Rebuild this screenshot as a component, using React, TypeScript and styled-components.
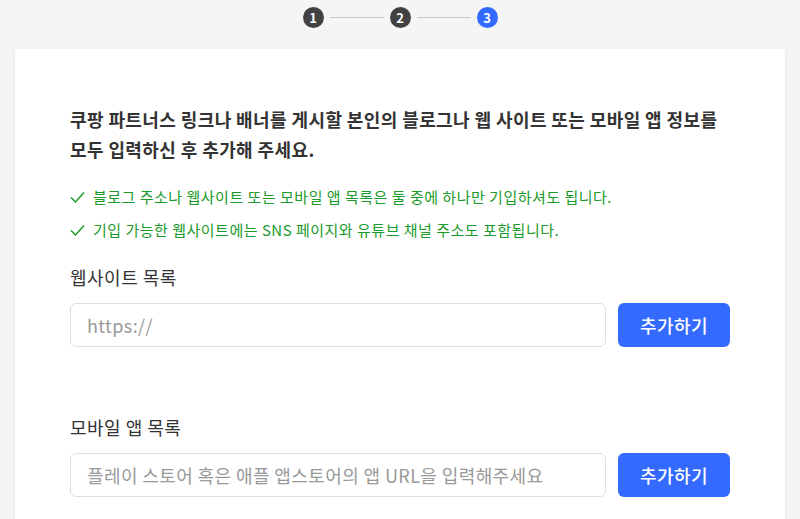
import * as React from "react";
import styled, { createGlobalStyle } from "styled-components";

const GlobalStyle = createGlobalStyle`
  html, body {
    margin: 0;
    padding: 0;
    background: #f5f5f5;
    font-family: "Noto Sans CJK KR", "Noto Sans", sans-serif;
    color: #333;
  }
  * { box-sizing: border-box; }
`;

const steps = [1, 2, 3];
const current = 3;

const notes = [
  "블로그 주소나 웹사이트 또는 모바일 앱 목록은 둘 중에 하나만 기입하셔도 됩니다.",
  "기입 가능한 웹사이트에는 SNS 페이지와 유튜브 채널 주소도 포함됩니다.",
];

const CheckIcon = () => (
  <svg width="15" height="13" viewBox="0 0 15 13" fill="none">
    <path d="M1 6.5 L5.5 11 L14 1.5" stroke="#1a9a2a" strokeWidth="1.5" />
  </svg>
);

export default function App() {
  return (
    <Page>
      <GlobalStyle />
      <Stepper>
        {steps.map((n, i) => (
          <React.Fragment key={n}>
            {i > 0 && <StepLine />}
            <StepDot active={n === current}>{n}</StepDot>
          </React.Fragment>
        ))}
      </Stepper>
      <Card>
        <Headline>
          쿠팡 파트너스 링크나 배너를 게시할 본인의 블로그나 웹 사이트 또는 모바일 앱 정보를
          <br />
          모두 입력하신 후 추가해 주세요.
        </Headline>
        <NoteList>
          {notes.map((t) => (
            <Note key={t}>
              <CheckIcon />
              <span>{t}</span>
            </Note>
          ))}
        </NoteList>
        <Section>
          <Label>웹사이트 목록</Label>
          <Row>
            <Input placeholder="https://" />
            <AddButton>추가하기</AddButton>
          </Row>
        </Section>
        <Section spaced>
          <Label>모바일 앱 목록</Label>
          <Row>
            <Input placeholder="플레이 스토어 혹은 애플 앱스토어의 앱 URL을 입력해주세요" />
            <AddButton>추가하기</AddButton>
          </Row>
        </Section>
      </Card>
    </Page>
  );
}

const Page = styled.div`
  padding: 0 15px;
  min-height: 519px;
  overflow: hidden;
`;

const Stepper = styled.div`
  height: 49px;
  display: flex;
  align-items: center;
  justify-content: center;
  padding-bottom: 15px;
  gap: 6px;
`;

const StepDot = styled.div<{ active?: boolean }>`
  width: 21px;
  height: 21px;
  border-radius: 50%;
  background: ${(p) => (p.active ? "#346aff" : "#424242")};
  color: #fff;
  font-size: 13px;
  font-weight: 700;
  display: flex;
  align-items: center;
  justify-content: center;
  line-height: 1;
`;

const StepLine = styled.div`
  width: 54px;
  height: 1px;
  background: #c8c8c8;
`;

const Card = styled.div`
  background: #fff;
  box-shadow: 0 1px 4px rgba(0, 0, 0, 0.06);
  padding: 55px 55px 40px;
  min-height: 600px;
`;

const Headline = styled.h2`
  margin: 0;
  font-size: 18px;
  font-weight: 700;
  line-height: 30px;
  color: #333;
  letter-spacing: 0.4px;
`;

const NoteList = styled.ul`
  list-style: none;
  margin: 22px 0 0;
  padding: 0;
  display: flex;
  flex-direction: column;
  gap: 11px;
`;

const Note = styled.li`
  display: flex;
  align-items: center;
  gap: 8px;
  font-size: 15px;
  line-height: 22px;
  color: #1a9a2a;
  letter-spacing: 0.5px;
`;

const Section = styled.div<{ spaced?: boolean }>`
  margin-top: ${(p) => (p.spaced ? "68px" : "24px")};
`;

const Label = styled.div`
  font-size: 18px;
  line-height: 24px;
  color: #333;
  letter-spacing: 0.5px;
  margin-bottom: 14px;
`;

const Row = styled.div`
  display: flex;
  gap: 12px;
`;

const Input = styled.input`
  flex: 1;
  height: 44px;
  border: 1px solid #dedede;
  border-radius: 6px;
  padding: 0 16px;
  font-family: inherit;
  font-size: 18px;
  letter-spacing: 0.4px;
  color: #333;
  outline: none;
  &::placeholder {
    color: #999;
  }
`;

const AddButton = styled.button`
  width: 112px;
  height: 44px;
  border: none;
  border-radius: 6px;
  background: #346aff;
  color: #fff;
  font-family: inherit;
  font-size: 18px;
  letter-spacing: 0.5px;
  font-weight: 500;
  cursor: pointer;
`;
